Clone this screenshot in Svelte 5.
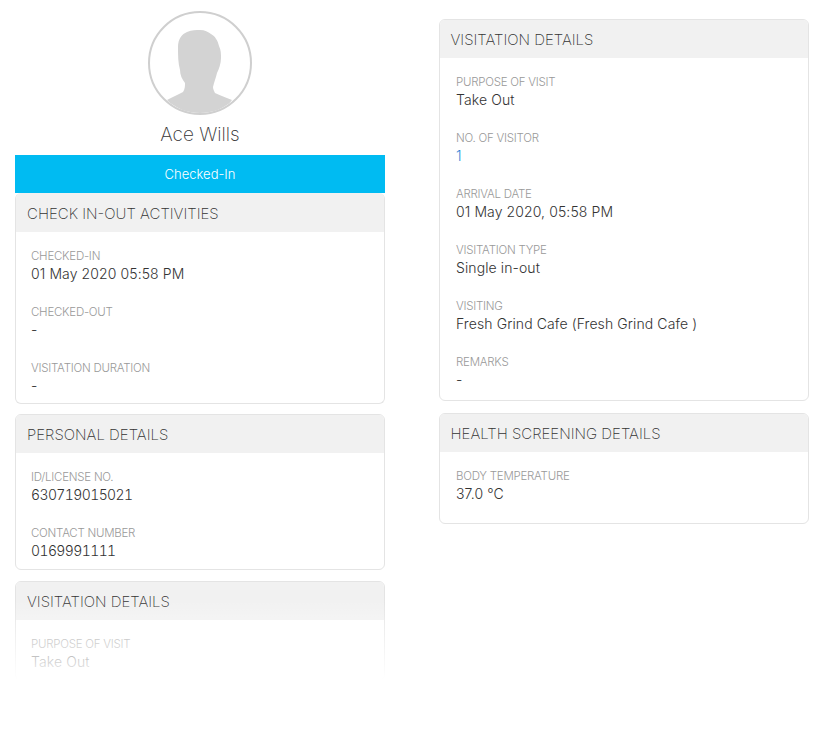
<script>
  const activities = [
    { label: 'CHECKED-IN', value: '01 May 2020 05:58 PM' },
    { label: 'CHECKED-OUT', value: '-' },
    { label: 'VISITATION DURATION', value: '-' }
  ];
  const personal = [
    { label: 'ID/LICENSE NO.', value: '630719015021', num: true },
    { label: 'CONTACT NUMBER', value: '0169991111', num: true }
  ];
  const visitation = [
    { label: 'PURPOSE OF VISIT', value: 'Take Out' },
    { label: 'NO. OF VISITOR', value: '1', link: true },
    { label: 'ARRIVAL DATE', value: '01 May 2020, 05:58 PM' },
    { label: 'VISITATION TYPE', value: 'Single in-out' },
    { label: 'VISITING', value: 'Fresh Grind Cafe (Fresh Grind Cafe )' },
    { label: 'REMARKS', value: '-' }
  ];
  const health = [{ label: 'BODY TEMPERATURE', value: '37.0 °C' }];
</script>

{#snippet card(title, fields, cls)}
  <section class="card {cls}">
    <h2>{title}</h2>
    <div class="body">
      {#each fields as f}
        <div class="field">
          <div class="label">{f.label}</div>
          <div class="value" class:link={f.link} class:num={f.num}>{f.value}</div>
        </div>
      {/each}
    </div>
  </section>
{/snippet}

<div class="page">
  <div class="col left">
    <div class="profile">
      <div class="avatar">
        <svg viewBox="0 0 100 100" width="100" height="100" aria-hidden="true">
          <path fill="#d3d3d3" d="M17 87 C22 84 28 82 33 79 C35 76 35 73 35 70 C32 66 30 62 30 57 C28 50 28 42 28 34 C28 26 32 21 37 19 C42 17 46 17 50 17 C55 17 58 19 61 21 C65 23 68 28 69 33 C71 37 71 41 71 45 C71 50 69 56 67 60 C66 65 64 69 63 74 C63 76 64 78 65 80 C70 82 76 85 82 87 C75 97 62 102 50 102 C38 102 25 97 17 87 Z"/>
        </svg>
      </div>
      <div class="name">Ace Wills</div>
    </div>
    <div class="status">Checked-In</div>
    {@render card('CHECK IN-OUT ACTIVITIES', activities, 'flush')}
    {@render card('PERSONAL DETAILS', personal, '')}
    {@render card('VISITATION DETAILS', visitation.slice(0, 1), '')}
    <div class="fade"></div>
  </div>
  <div class="col right">
    {@render card('VISITATION DETAILS', visitation, 'long')}
    {@render card('HEALTH SCREENING DETAILS', health, 'tall')}
  </div>
</div>

<style>
  :global(body) {
    margin: 0;
    background: #fff;
  }
  .page {
    height: 732px;
    overflow: hidden;
    display: flex;
    gap: 54px;
    padding: 0 0 0 15px;
    box-sizing: border-box;
    font-family: Inter, Roboto, "Liberation Sans", sans-serif;
    font-weight: 300;
    color: #333;
  }
  .col {
    width: 370px;
    flex: none;
  }
  .left {
    position: relative;
    padding-top: 11px;
  }
  .right {
    padding-top: 19px;
  }
  .profile {
    display: flex;
    flex-direction: column;
    align-items: center;
  }
  .avatar {
    width: 104px;
    height: 104px;
    box-sizing: border-box;
    border: 2px solid #cfcfcf;
    border-radius: 50%;
    overflow: hidden;
  }
  .avatar svg {
    display: block;
  }
  .name {
    font-size: 19px;
    font-weight: 200;
    line-height: 24px;
    margin-top: 8px;
  }
  .status {
    margin-top: 8px;
    height: 38px;
    line-height: 38px;
    background: #00bbf2;
    color: #fff;
    text-align: center;
    font-size: 13px;
  }
  .card {
    border: 1px solid #e4e4e4;
    border-radius: 6px;
    overflow: hidden;
    margin-bottom: 11px;
    background: #fff;
  }
  .card.flush {
    margin-bottom: 10px;
    border-top: 0;
  }
  .card h2 {
    margin: 0;
    height: 37px;
    padding: 1px 11px 0;
    line-height: 38px;
    background: #f1f1f1;
    font-size: 15px;
    font-weight: 200;
    color: #333;
  }
  .flush h2 {
    height: 37px;
    padding-top: 2px;
    line-height: 37px;
  }
  .right h2 {
    padding-left: 10.5px;
  }
  .body {
    padding: 15px 15px 9px;
  }
  .right .body {
    padding-left: 16px;
  }
  .flush .body {
    padding-bottom: 8px;
  }
  .long {
    margin-bottom: 12px;
  }
  .long .body {
    padding-bottom: 11px;
  }
  .tall .body {
    padding-bottom: 20px;
  }
  .field + .field {
    margin-top: 20px;
  }
  .label {
    font-size: 11.5px;
    letter-spacing: -0.25px;
    line-height: 18px;
    color: #999;
  }
  .value {
    font-size: 14px;
    letter-spacing: 0.1px;
    line-height: 18px;
    color: #333;
  }
  .value.num {
    font-variant-numeric: tabular-nums;
    letter-spacing: -0.6px;
  }
  .value.link {
    color: #2f86d6;
  }
  .fade {
    position: absolute;
    left: -1px;
    right: -1px;
    top: 600px;
    bottom: 0;
    background: linear-gradient(to bottom, rgba(255, 255, 255, 0) 0, #fff 80px);
  }
</style>
